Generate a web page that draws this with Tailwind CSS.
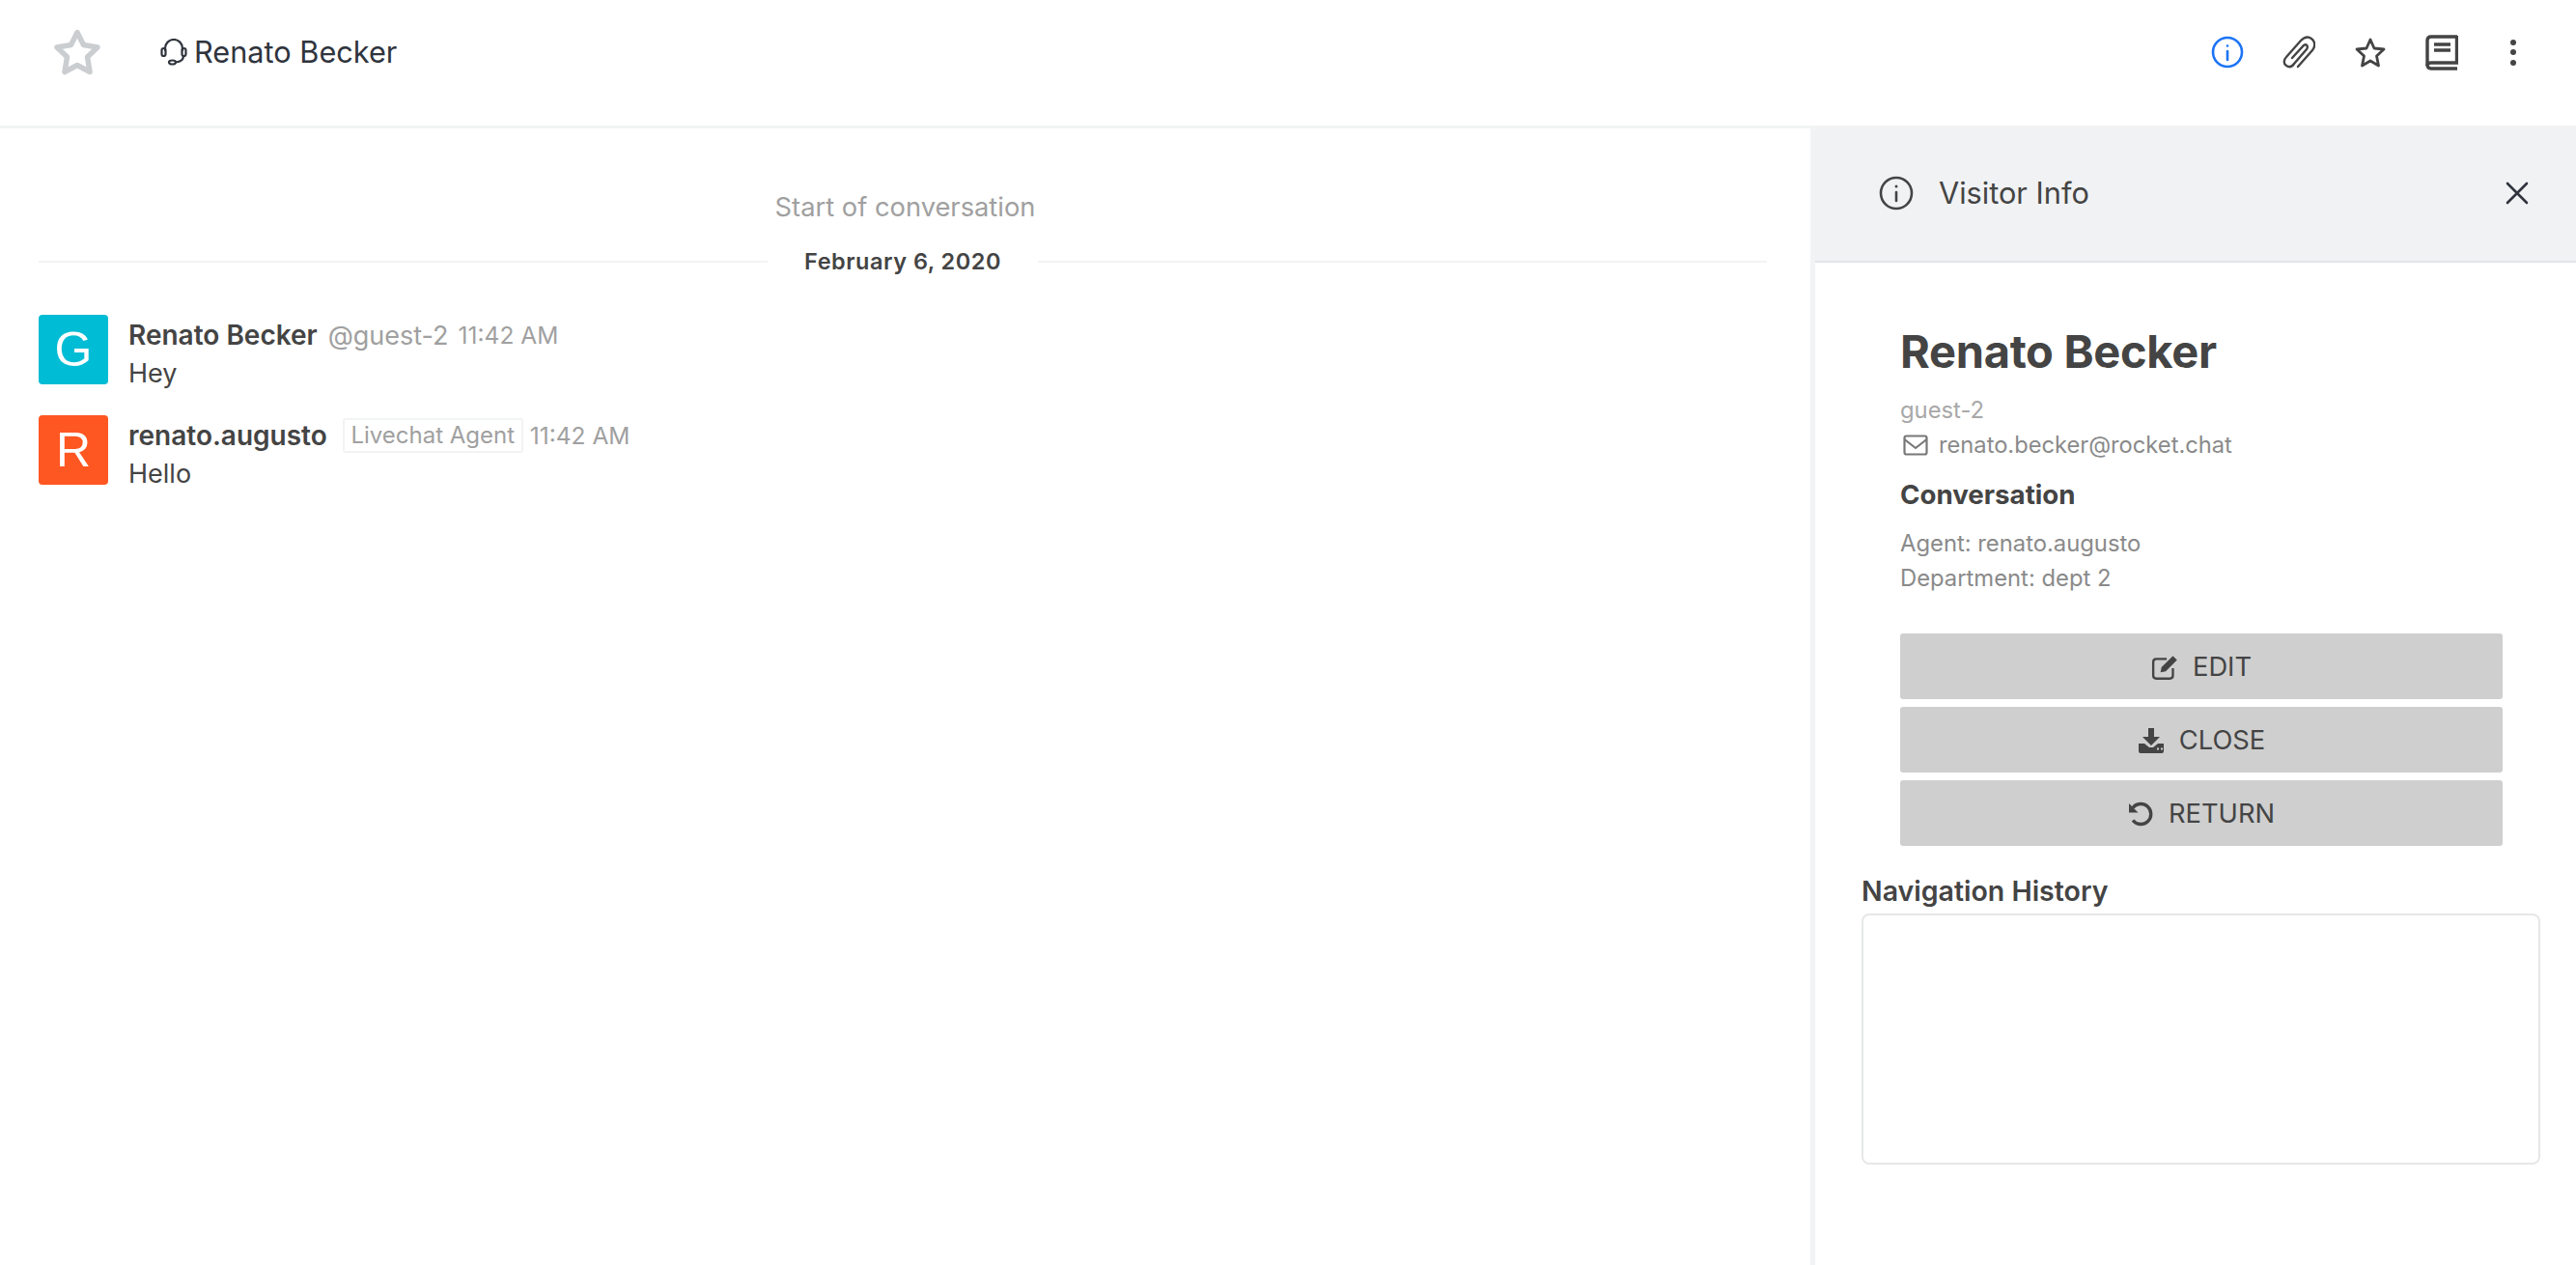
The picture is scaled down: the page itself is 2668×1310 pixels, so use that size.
<!DOCTYPE html>
<html lang="en">
<head>
  <meta charset="UTF-8" />
  <title>Renato Becker - Visitor Info</title>
  <script src="https://cdn.jsdelivr.net/npm/@tailwindcss/browser@4"></script>
</head>
<body class="bg-white font-['Inter',sans-serif] text-[#444] h-[1310px] overflow-hidden">
  <!-- Header -->
  <header class="h-[130px] flex items-center pb-[22px] bg-white">
    <svg class="ml-[56px] w-[48px] h-[48px] text-[#cbced1]" viewBox="0 0 48 48" fill="none" stroke="currentColor" stroke-width="5.500" stroke-linejoin="round"><path d="M24 3.500l6.500 13 14.500 2.500-10.500 10 2.500 15.500L24 37.500l-13 7 2.500-15.500L3 19l14.500-2.500z"/></svg>
    <svg class="ml-[62px] w-[28px] h-[28px] text-[#2f343d]" viewBox="0 0 28 28" fill="none" stroke="currentColor" stroke-width="2.200" stroke-linecap="round"><path d="M5 12V10a9 9 0 0 1 18 0v2"/><rect x="1.500" y="10" width="4" height="8" rx="2"/><rect x="22.500" y="10" width="4" height="8" rx="2"/><path d="M24 18c0 4-3 6-8 6.500"/><ellipse cx="12.500" cy="24.500" rx="3.500" ry="2"/></svg>
    <h1 class="ml-[7px] text-[30.700px] text-[#2f343d] leading-none">Renato Becker</h1>
    <div class="ml-auto flex items-center gap-[40px] text-[#444] mr-[48px]">
      <svg class="w-[34px] h-[34px] text-[#1d74f5]" viewBox="0 0 34 34" fill="none" stroke="currentColor" stroke-width="2.600" stroke-linecap="round"><circle cx="17" cy="17" r="15"/><path d="M17 16v9"/><circle cx="17" cy="10.500" r="1.300" fill="currentColor" stroke="none"/></svg>
      <svg class="w-[34px] h-[34px]" viewBox="0 0 34 34" fill="none" stroke="currentColor" stroke-width="2.400" stroke-linecap="round"><path d="M16 32L31 15C35 10 33 5 30 3C26 0 22 2 19 5L4 22C1 25 1 29 4 31C7 33 10 32 12 29L25 14C27 11 25 8 22 10L10 23"/></svg>
      <svg class="w-[34px] h-[32px]" viewBox="0 0 34 32" fill="none" stroke="currentColor" stroke-width="2.800" stroke-linejoin="round"><path d="M17 3l4 9 10 1-7.500 7 2 10L17 25l-8.500 5 2-10L3 13l10-1z"/></svg>
      <svg class="w-[34px] h-[37px]" viewBox="0 0 34 37" fill="none" stroke="currentColor" stroke-width="3.400"><path d="M33 2H6C3.500 2 2 3.500 2 6v25c0 2.500 1.500 4 4 4h27"/><path d="M32.500 1v28H6c-2.500 0-4 1-4 3"/><path d="M9 10h17M9 16h17" stroke-width="3.400"/></svg>
      <div class="w-[34px] flex flex-col gap-[4.500px] items-center">
        <span class="block w-[6px] h-[6px] rounded-full bg-[#444]"></span>
        <span class="block w-[6px] h-[6px] rounded-full bg-[#444]"></span>
        <span class="block w-[6px] h-[6px] rounded-full bg-[#444]"></span>
      </div>
    </div>
  </header>

  <div class="flex h-[1180px] border-t-[3px] border-[#f2f3f5]">
    <!-- Chat -->
    <main class="flex-1 px-[40px] pt-[66px]">
      <p class="text-center text-[27.300px] leading-[32px] text-[#a0a0a0]">Start of conversation</p>
      <div class="flex items-center mt-[22px] h-[36px] pr-[5px]">
        <div class="flex-1 h-[2px] bg-[#f2f3f5]"></div>
        <span class="px-[38px] text-[23.500px] font-semibold text-[#444] tracking-[0.5px]">February 6, 2020</span>
        <div class="flex-1 h-[2px] bg-[#f2f3f5]"></div>
      </div>
      <div class="flex mt-[37px] h-[72px]">
        <div class="w-[72px] h-[72px] rounded-[4px] bg-[#00bcd4] text-white flex items-center justify-center text-[50px] font-['Liberation_Sans',sans-serif]">G</div>
        <div class="ml-[21px]">
          <div class="flex items-center h-[42px] leading-none">
            <span class="text-[28px] font-semibold text-[#444]">Renato Becker</span>
            <span class="ml-[11px] text-[27px] text-[#a0a0a0]">@guest-2</span>
            <span class="ml-[10px] text-[24.500px] text-[#a0a0a0]">11:42 AM</span>
          </div>
          <p class="text-[27px] leading-[38px] text-[#444]">Hey</p>
        </div>
      </div>
      <div class="flex mt-[32px] h-[72px]">
        <div class="w-[72px] h-[72px] rounded-[4px] bg-[#ff5722] text-white flex items-center justify-center text-[50px] font-['Liberation_Sans',sans-serif]">R</div>
        <div class="ml-[21px]">
          <div class="flex items-center h-[42px] leading-none">
            <span class="text-[28px] font-semibold text-[#444]">renato.augusto</span>
            <span class="ml-[16px] h-[36px] w-[187px] justify-center flex items-center border-2 border-[#f2f3f5] rounded-[3px] text-[24px] text-[#a0a0a0]">Livechat Agent</span>
            <span class="ml-[7px] text-[24.500px] text-[#a0a0a0]">11:42 AM</span>
          </div>
          <p class="text-[27px] leading-[38px] text-[#444]">Hello</p>
        </div>
      </div>
    </main>

    <!-- Visitor info -->
    <aside class="w-[793px] border-l-[5px] border-[#f2f3f5] flex flex-col">
      <div class="h-[142px] -mt-[3px] bg-[#f1f2f4] border-b-2 border-[#e1e5e8] flex items-center pl-[66px] pr-[49px] shrink-0">
        <svg class="w-[36px] h-[36px] text-[#444]" viewBox="0 0 36 36" fill="none" stroke="currentColor" stroke-width="2.600" stroke-linecap="round"><circle cx="18" cy="18" r="16"/><path d="M18 17v9"/><circle cx="18" cy="11" r="1.500" fill="currentColor" stroke="none"/></svg>
        <h2 class="ml-[26px] text-[30.700px] text-[#444]">Visitor Info</h2>
        <svg class="ml-auto w-[24px] h-[24px] text-[#2f343d]" viewBox="0 0 24 24" fill="none" stroke="currentColor" stroke-width="2.600" stroke-linecap="round"><path d="M2 2l20 20M22 2L2 22"/></svg>
      </div>

      <div class="pl-[48px] w-[751px]">
        <div class="pl-[40px] w-[664px]">
          <h3 class="mt-[62px] text-[47px] leading-[60px] font-bold text-[#444] tracking-[-0.3px]">Renato Becker</h3>
          <p class="mt-[13px] text-[23.800px] leading-[36px] text-[#a8a8a8]">guest-2</p>
          <div class="flex items-center h-[36px] text-[23.700px]">
            <svg class="ml-[3px] w-[26px] h-[22px] text-[#777]" viewBox="0 0 26 22" fill="none" stroke="currentColor" stroke-width="2.200" stroke-linejoin="round"><rect x="1.500" y="1.500" width="23" height="19" rx="2"/><path d="M1.500 5L13 14 24.500 5"/></svg>
            <span class="ml-[11px] text-[#8a8a8a]">renato.becker@rocket.chat</span>
          </div>
          <h4 class="mt-[13px] text-[27.700px] leading-[40px] font-bold text-[#444]">Conversation</h4>
          <p class="mt-[13px] text-[23.800px] leading-[36px] text-[#8a8a8a]">Agent: renato.augusto</p>
          <p class="text-[23.800px] leading-[36px] text-[#8a8a8a]">Department: dept 2</p>

          <div class="mt-[39px] flex flex-col gap-[8px]">
            <button class="h-[68px] pt-[2px] rounded-[3px] bg-[#cfcfcf] flex items-center justify-center text-[27.300px] text-[#444]">
              <svg class="w-[30px] h-[28px] mr-[13px]" viewBox="0 0 28 26" fill="none" stroke="currentColor" stroke-width="2.200"><path d="M21 14v7c0 2-1 3-3 3H5c-2 0-3-1-3-3V8c0-2 1-3 3-3h10"/><path d="M10 13L21 2l4 4-11 11-5 1z" fill="currentColor" stroke="none"/></svg>
              EDIT
            </button>
            <button class="h-[68px] pt-[2px] rounded-[3px] bg-[#cfcfcf] flex items-center justify-center text-[27.300px] text-[#444]">
              <svg class="w-[28px] h-[26px] mr-[15px]" viewBox="0 0 28 26" fill="currentColor"><path d="M11 0h6v9h6l-9 9-9-9h6z"/><path fill-rule="evenodd" d="M1 16h6l5 4h4l5-4h6v8a2 2 0 0 1-2 2H3a2 2 0 0 1-2-2zM20 22.500h2v-2h-2zM24 22.500h2v-2h-2z"/></svg>
              CLOSE
            </button>
            <button class="h-[68px] pt-[2px] rounded-[3px] bg-[#cfcfcf] flex items-center justify-center text-[27.300px] text-[#444]">
              <svg class="w-[26px] h-[26px] mr-[16px]" viewBox="0 0 26 26" fill="none" stroke="currentColor" stroke-width="3.400"><path d="M5 6.500A10.500 10.500 0 1 1 5 19.500" stroke-linecap="butt"/><path d="M1 2v9.500h9.500z" fill="currentColor" stroke="none"/></svg>
              RETURN
            </button>
          </div>
        </div>

        <h4 class="mt-[30px] text-[28.500px] leading-[34px] font-semibold text-[#444]">Navigation History</h4>
        <div class="mt-[6px] w-[703px] h-[260px] border-2 border-[#e6e7e8] rounded-[8px]"></div>
      </div>
    </aside>
  </div>
</body>
</html>
